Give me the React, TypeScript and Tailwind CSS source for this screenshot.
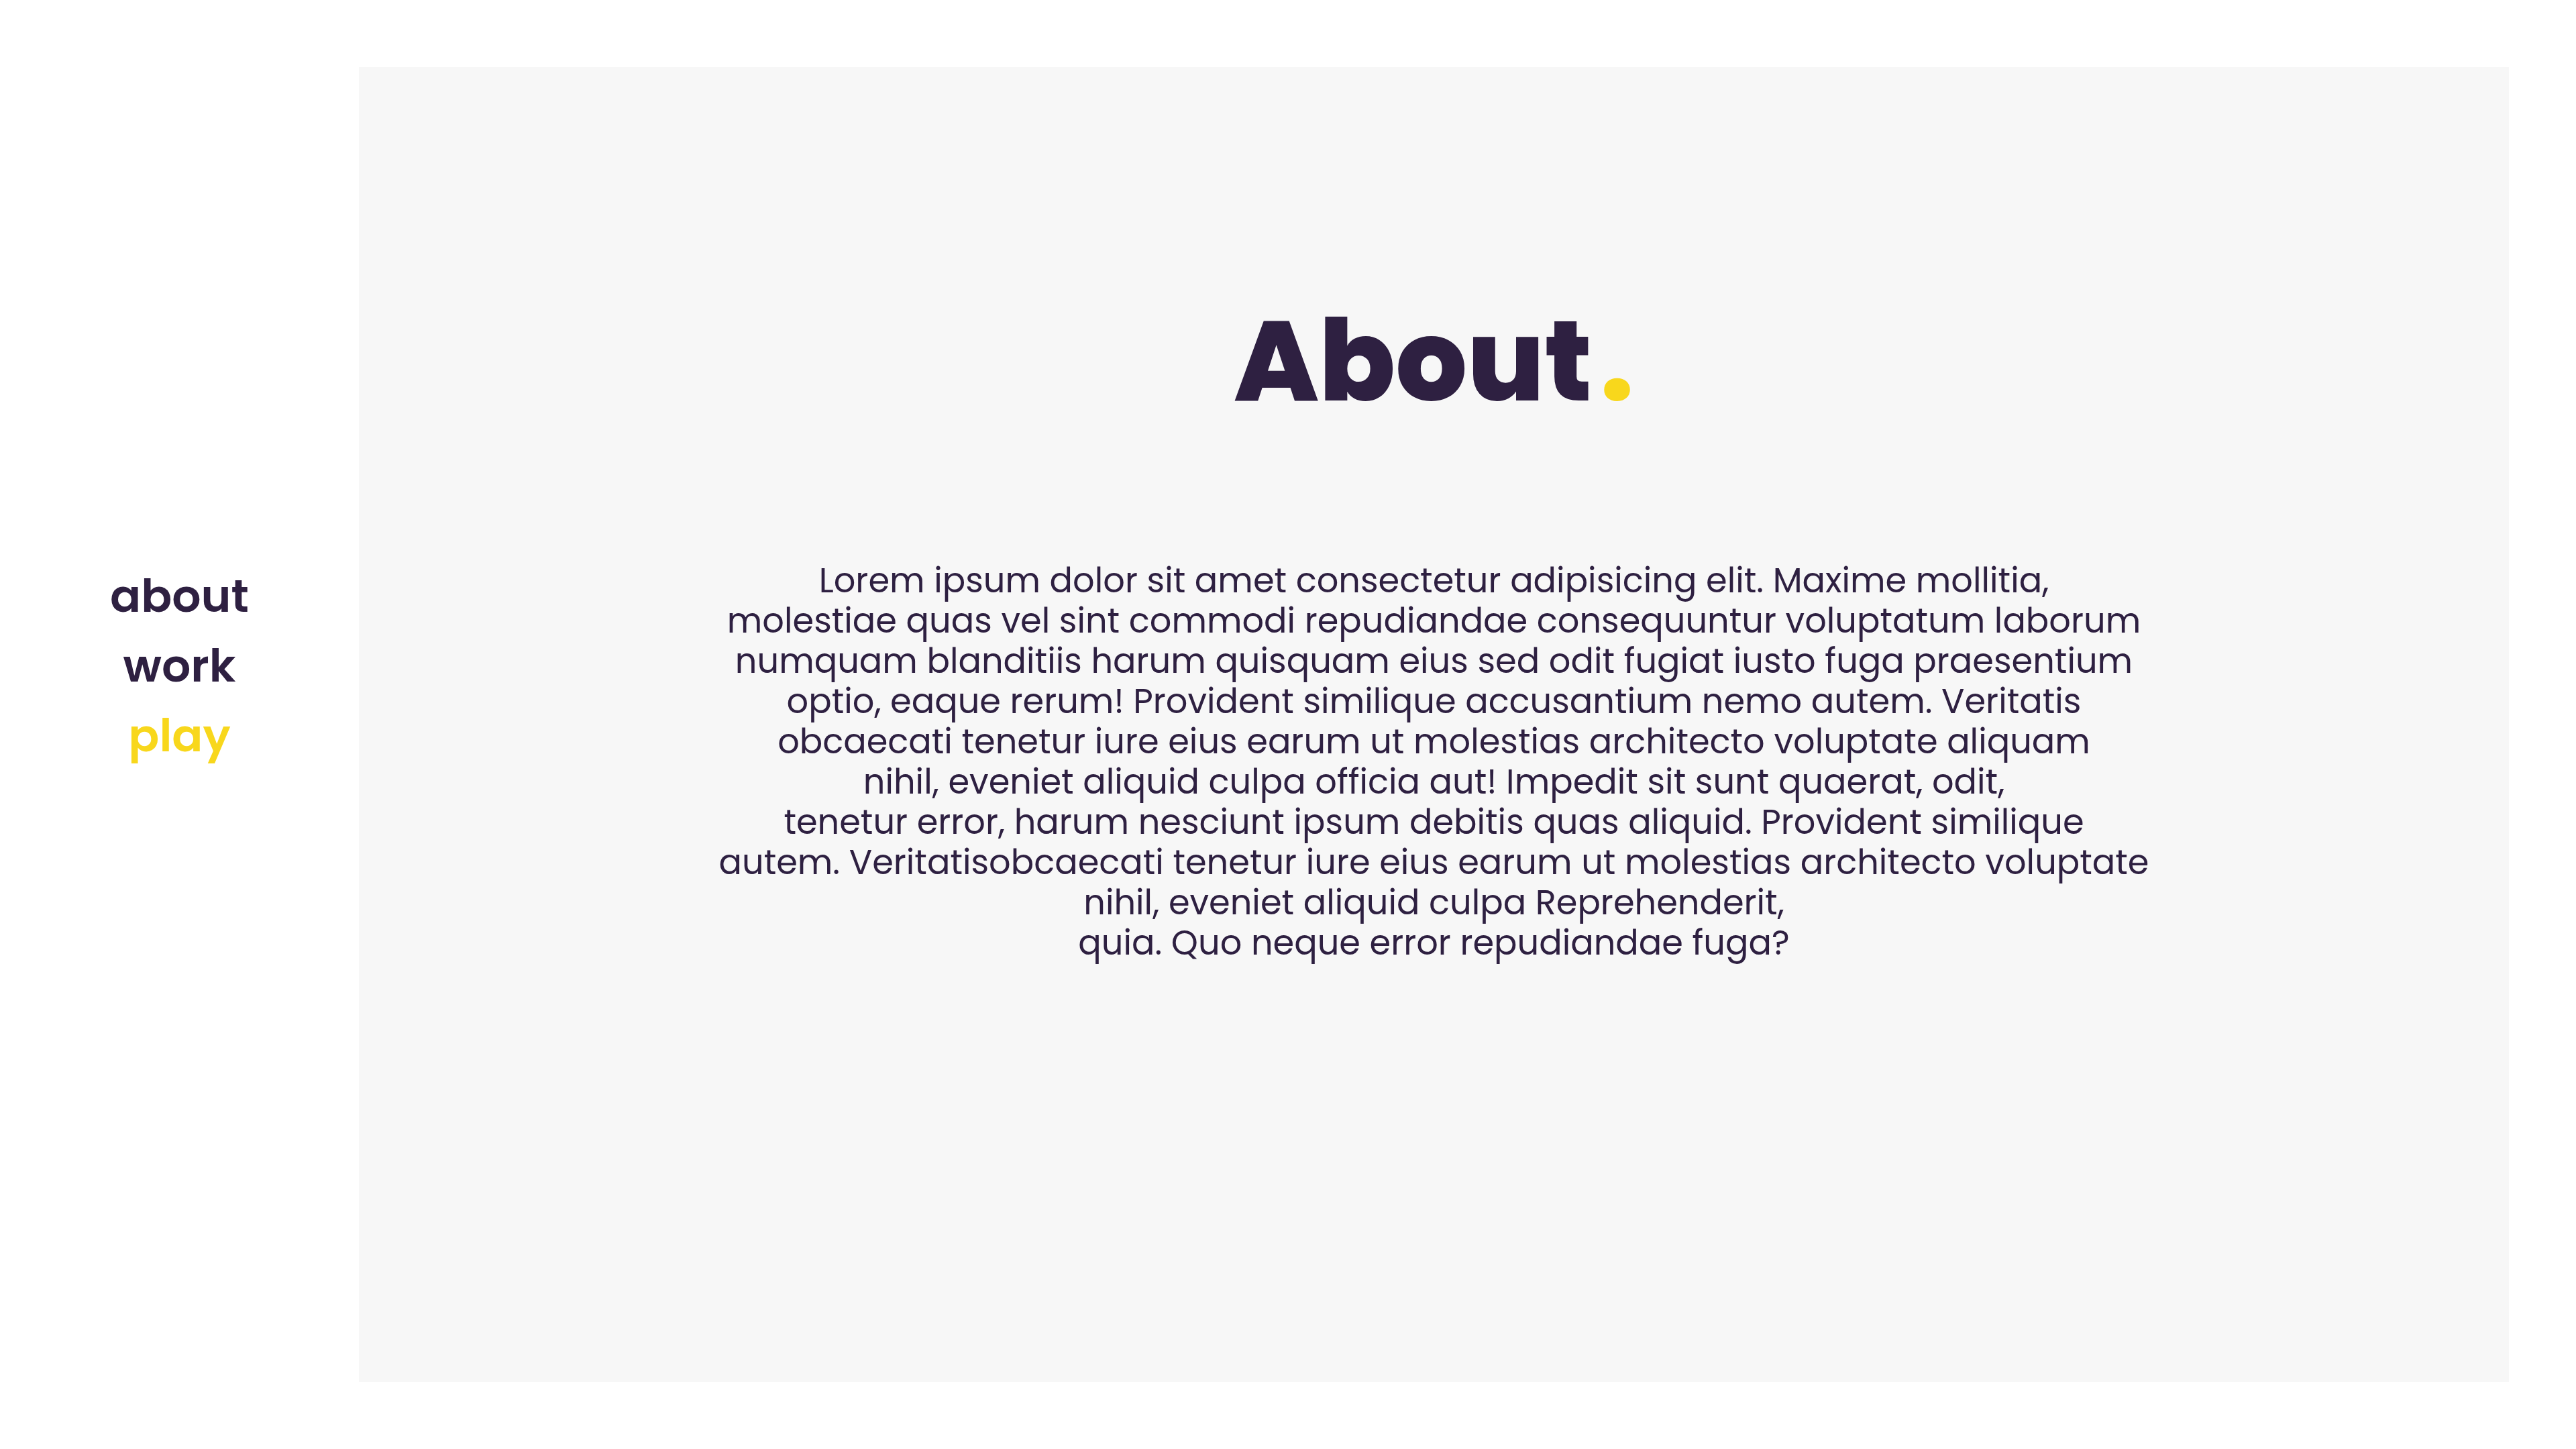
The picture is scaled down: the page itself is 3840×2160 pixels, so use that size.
const bodyLines = [
  "Lorem ipsum dolor sit amet consectetur adipisicing elit. Maxime mollitia,",
  "molestiae quas vel sint commodi repudiandae consequuntur voluptatum laborum",
  "numquam blanditiis harum quisquam eius sed odit fugiat iusto fuga praesentium",
  "optio, eaque rerum! Provident similique accusantium nemo autem. Veritatis",
  "obcaecati tenetur iure eius earum ut molestias architecto voluptate aliquam",
  "nihil, eveniet aliquid culpa officia aut! Impedit sit sunt quaerat, odit,",
  "tenetur error, harum nesciunt ipsum debitis quas aliquid. Provident similique",
  "autem. Veritatisobcaecati tenetur iure eius earum ut molestias architecto voluptate",
  "nihil, eveniet aliquid culpa Reprehenderit,",
  "quia. Quo neque error repudiandae fuga?",
];

const navItems = [
  { label: "about", active: false },
  { label: "work", active: false },
  { label: "play", active: true },
];

export default function App() {
  return (
    <div className="flex h-screen w-full bg-white font-['Poppins','DejaVu_Sans',sans-serif] text-[#2e2041]">
      {/* Side navigation */}
      <nav className="flex w-[535px] shrink-0 flex-col items-center pt-[837px]">
        {navItems.map((item) => (
          <a
            key={item.label}
            href="#"
            className={`text-[68px] font-semibold leading-[104px] ${item.active ? "text-[#f8d71c]" : "text-[#2e2041]"}`}
          >
            {item.label}
          </a>
        ))}
      </nav>

      {/* Main panel */}
      <main className="my-[100px] mr-[100px] flex flex-1 flex-col items-center bg-[#f7f7f7] pt-[355px]">
        <h1 className="text-[168px] font-extrabold leading-none">
          About<span className="ml-[12px] text-[#f8d71c]">.</span>
        </h1>
        <p className="mt-[212px] text-center text-[51px] leading-[60px]">
          {bodyLines.map((line, i) => (
            <span key={i} className="block whitespace-nowrap">
              {line}
            </span>
          ))}
        </p>
      </main>
    </div>
  );
}
